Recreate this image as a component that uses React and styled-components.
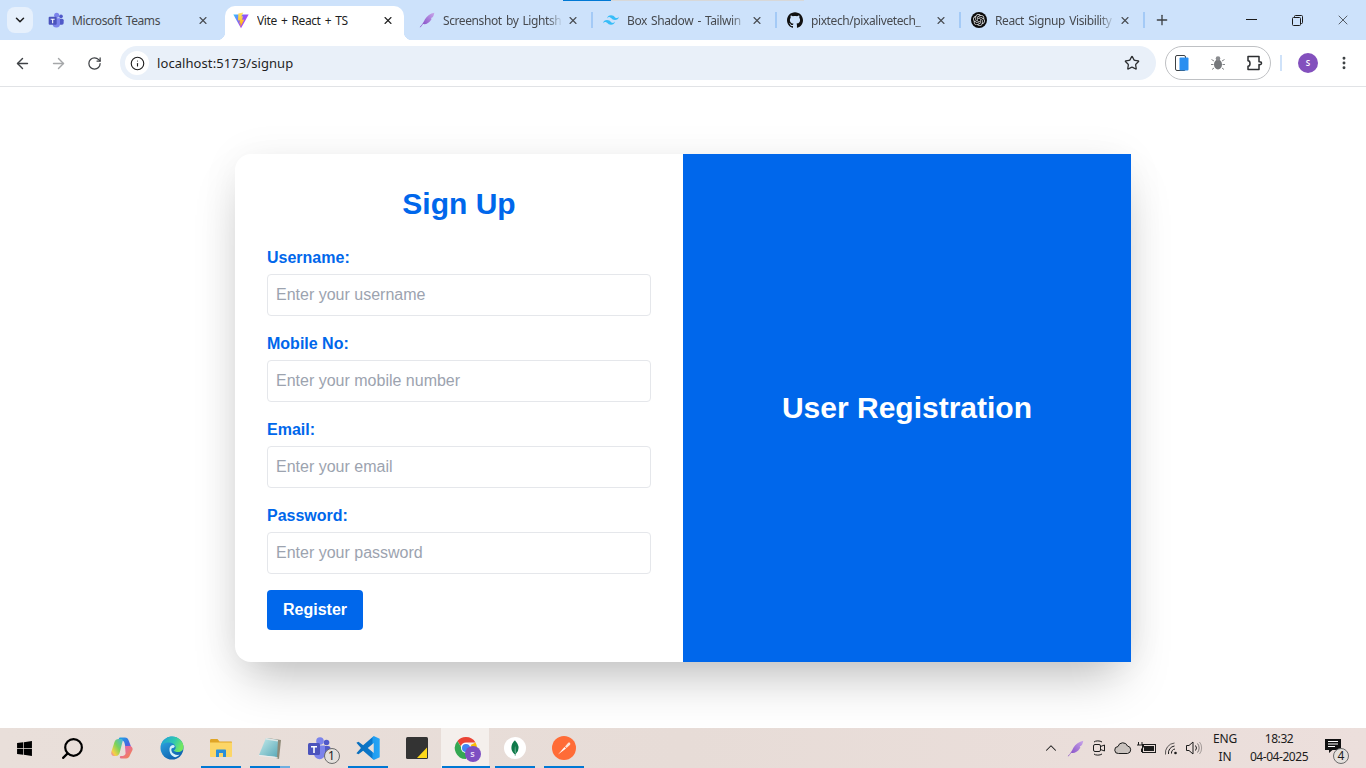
import React from "react";
import styled, { createGlobalStyle } from "styled-components";
import { ArrowLeft, ArrowRight, RotateCw, Star, Info, X, Plus, ChevronDown, ChevronUp, EllipsisVertical, Search } from "lucide-react";
import { SiGithub, SiTailwindcss, SiOpenai, SiMongodb } from "react-icons/si";
import { FaWindows } from "react-icons/fa";

const Global = createGlobalStyle`
  html, body { margin: 0; padding: 0; background: #fff; overflow: hidden; }
  * { box-sizing: border-box; }
`;

const UI = `"Noto Sans", "Open Sans", sans-serif`;
const WEB = `"Liberation Sans", Arial, sans-serif`;
const BLUE = "#0067eb";

const Screen = styled.div`
  width: 1366px; height: 768px; display: flex; flex-direction: column; background: #fff; position: relative; overflow: hidden;
`;

/* ---------- tab strip ---------- */
const TabStrip = styled.div`
  height: 40px; flex: none; background: #cde2fb; display: flex; position: relative;
`;
const CaptureMark = styled.div`
  position: absolute; top: 0; left: 563px; width: 241px; height: 1px;
  background: linear-gradient(to right, #0078d4 0 48px, #d8d8d8 48px);
`;
const TabMenu = styled.div`
  width: 26px; height: 26px; margin: 7px 8px 0 7px; border-radius: 8px; background: #e6f0fc; color: #1f1f1f;
  display: flex; align-items: center; justify-content: center; flex: none;
`;
const Tab = styled.div`
  width: ${p => p.$w}px; height: 34px; margin-top: 6px; flex: none; position: relative; display: flex; align-items: center;
  padding: 0 ${p => p.$right}px 6px ${p => p.$pad}px; gap: 8px;
  font: 12px/16px ${UI}; letter-spacing: -0.4px; word-spacing: 1.4px; color: ${p => (p.$active ? "#1f1f1f" : "#474a4f")};
  ${p => p.$active && `
    background: #fff; border-radius: 10px 10px 0 0;
    &::before, &::after { content: ""; position: absolute; bottom: 0; width: 8px; height: 8px; }
    &::before { left: -8px; background: radial-gradient(circle at 0 0, #cde2fb 8px, #fff 8.5px); }
    &::after { right: -8px; background: radial-gradient(circle at 100% 0, #cde2fb 8px, #fff 8.5px); }
  `}
  ${p => p.$sep && `
    &::after { content: ""; position: absolute; right: 0; top: 6px; width: 2px; height: 16px; background: #a4caf6; }
  `}
`;
const TabIcon = styled.span`
  width: 16px; height: 16px; flex: none; display: flex; align-items: center; justify-content: center;
`;
const TabTitle = styled.span`
  flex: 1; min-width: 0; padding-top: 2px; white-space: nowrap; overflow: hidden;
  ${p => p.$fade && `margin-right: -4px; mask-image: linear-gradient(to right, #000 calc(100% - 16px), transparent);`}
`;
const TabClose = styled.span`
  width: 12px; height: 12px; flex: none; display: flex; align-items: center; justify-content: center;
  color: ${p => (p.$active ? "#1f1f1f" : "#474a4f")};
`;
const NewTab = styled.div`
  width: 34px; height: 34px; margin: 3px 0 0 0; flex: none; display: flex; align-items: center; justify-content: center; color: #3c4043;
`;
const WindowControls = styled.div`
  margin-left: auto; display: flex; height: 40px;
`;
const WinBtn = styled.div`
  width: 46px; display: flex; align-items: center; justify-content: center;
`;
const KnotDisc = styled.span`
  width: 16px; height: 16px; border-radius: 50%; background: #0c0c0c; color: #ddd; display: flex; align-items: center; justify-content: center;
`;

/* ---------- toolbar ---------- */
const Toolbar = styled.div`
  height: 47px; flex: none; background: #fff; border-bottom: 1px solid #e1e3e6; border-radius: 8px 8px 0 0;
  display: flex; align-items: center; padding: 0 0 0 4px; position: relative;
`;
const NavBtn = styled.div`
  width: 36px; height: 34px; flex: none; display: flex; align-items: center; justify-content: center;
  color: ${p => (p.$off ? "#a5a7a9" : "#3f4246")};
`;
const Omnibox = styled.div`
  width: 1036px; height: 34px; margin-left: 8px; flex: none; border-radius: 17px; background: #e9f0f9; display: flex; align-items: center; padding: 0 16px 0 5px;
`;
const InfoDot = styled.div`
  width: 24px; height: 24px; border-radius: 50%; background: #fff; color: #1f1f1f; display: flex; align-items: center; justify-content: center; flex: none;
`;
const Url = styled.div`
  flex: 1; margin-left: 8px; font: 13px/18px ${UI}; letter-spacing: 0.08px; color: #1f1f1f;
`;
const ExtPill = styled.div`
  width: 106px; height: 34px; margin-left: 9px; border: 1px solid #bfc1c4; border-radius: 17px; flex: none;
  display: flex; align-items: center; justify-content: space-between; padding: 0 6px;
`;
const ExtIcon = styled.div`
  width: 20px; height: 20px; display: flex; align-items: center; justify-content: center;
`;
const ToolDivider = styled.div`
  width: 2px; height: 16px; background: #cfe2f9; margin-left: 9px; flex: none;
`;
const Avatar = styled.div`
  width: 20px; height: 20px; margin-left: 16px; border-radius: 50%; background: #8350bd; color: #fff; flex: none;
  font: 600 8px/20px ${UI}; text-align: center;
`;
const Dots = styled.div`
  width: 20px; height: 20px; margin-left: 16px; flex: none; color: #3c4043; display: flex; align-items: center; justify-content: center;
`;

/* ---------- page ---------- */
const Main = styled.main`
  flex: 1; display: flex; align-items: center; justify-content: center; padding-top: 1px; background: #fff;
`;
const Card = styled.div`
  width: 896px; height: 508px; display: flex; background: #fff; border-radius: 16px;
  box-shadow: 0 25px 50px -12px rgba(0,0,0,.25), 0 0 40px rgba(0,0,0,.05);
`;
const FormSide = styled.form`
  width: 448px; padding: 32px; display: flex; flex-direction: column;
`;
const Title = styled.h2`
  margin: 0 0 24px; font: 700 30px/36px ${WEB}; color: ${BLUE}; text-align: center;
`;
const Field = styled.div`
  margin-bottom: 16px; display: flex; flex-direction: column;
`;
const Label = styled.label`
  font: 700 16px/24px ${WEB}; color: ${BLUE}; margin-bottom: 4px;
`;
const Input = styled.input`
  width: 100%; height: 42px; padding: 8px; border: 1px solid #e5e7eb; border-radius: 4px; background: #fff;
  font: 16px/24px ${WEB}; color: #111; outline: none;
  &::placeholder { color: #9ca3af; opacity: 1; }
`;
const Submit = styled.button`
  width: 96px; height: 40px; border: 0; border-radius: 4px; background: ${BLUE}; color: #fff; font: 700 16px/24px ${WEB}; padding: 0;
`;
const BlueSide = styled.div`
  width: 448px; background: ${BLUE}; display: flex; align-items: center; justify-content: center;
  color: #fff; font: 700 30px/36px ${WEB};
`;

/* ---------- taskbar ---------- */
const Taskbar = styled.div`
  height: 40px; flex: none; background: linear-gradient(to right, #e9dfda, #e7dcd7 50%, #ecdfdc); display: flex; align-items: stretch;
`;
const TaskItem = styled.div`
  width: ${p => p.$w || 49}px; flex: none; display: flex; align-items: center; justify-content: center; position: relative;
  ${p => p.$active && `background: linear-gradient(to right, transparent 0 0.5px, #f4efec 0.5px 48.5px, transparent 48.5px);`}
  ${p => p.$run && `
    &::after { content: ""; position: absolute; bottom: 0; left: ${p.$active ? "0.5px" : "4.5px"}; width: ${p.$active ? "48px" : "40px"}; height: 2px;
      background: ${p.$stack ? "linear-gradient(to right, #0078d4 30px, #6eaee0 30px)" : "#0078d4"}; }
  `}
`;
const Tray = styled.div`
  margin-left: auto; display: flex; align-items: center;
`;
const TrayIcon = styled.div`
  width: ${p => p.$w || 24}px; flex: none; display: flex; align-items: center; justify-content: center; color: #1c1c1c;
`;
const Lang = styled.div`
  width: 36px; margin-left: 2px; text-align: center; font: 12px/18px ${UI}; color: #1c1c1c; letter-spacing: -0.2px;
`;
const Clock = styled.div`
  width: 68px; margin-left: 2px; text-align: center; font: 12px/18px ${UI}; color: #1c1c1c; letter-spacing: -0.45px;
`;
const Notify = styled.div`
  width: 40px; height: 100%; margin-right: 13px; position: relative; display: flex; align-items: center; justify-content: center; padding-bottom: 4px;
`;
const CountBadge = styled.span`
  position: absolute; right: ${p => p.$r}px; bottom: ${p => p.$b}px; width: 16px; height: 16px; border-radius: 50%;
  border: 1px solid #6b6b6b; background: #e4e0dc; color: #1c1c1c; font: 12px/14px ${UI}; text-align: center;
`;
const TeamsWrap = styled.span`
  position: relative; display: flex;
`;
const ChromeWrap = styled.span`
  position: relative; display: flex;
`;
const PurpleBadge = styled.span`
  position: absolute; right: -3px; bottom: -2px; width: 16px; height: 16px; border-radius: 50%; background: #7d4fc2; color: #e8dcf5;
  font: 600 9px/15px ${UI}; text-align: center;
`;
const MongoBadge = styled.span`
  width: 22px; height: 22px; border-radius: 50%; background: #fff; display: flex; align-items: center; justify-content: center; color: #0f7a4a;
`;
const PostmanBadge = styled.span`
  width: 24px; height: 24px; border-radius: 50%; background: #ff6c37; display: flex; align-items: center; justify-content: center;
`;

/* ---------- drawn icons ---------- */
const Teams = ({ s = 16 }) => (
  <svg width={s} height={s} viewBox="0 0 24 24">
    <circle cx="19.5" cy="6.5" r="2.8" fill="#5059c9" />
    <rect x="15" y="10" width="8.5" height="9" rx="2.5" fill="#5059c9" />
    <circle cx="13" cy="5" r="3.8" fill="#7b83eb" />
    <path d="M8 9.5h10v8a5.5 5.5 0 0 1-11 .5z" fill="#7b83eb" />
    <rect x="1" y="7" width="12" height="12" rx="1.5" fill="#4b53bc" />
    <path d="M4 10h6v1.5H7.8V17H6.2v-5.5H4z" fill="#fff" />
  </svg>
);
const Vite = () => (
  <svg width="17" height="17" viewBox="0 0 24 24">
    <defs>
      <linearGradient id="vg1" x1="0" y1="0" x2="1" y2="0.6"><stop offset="0" stopColor="#35c8ff" /><stop offset=".55" stopColor="#8a5cf5" /><stop offset="1" stopColor="#c52ffe" /></linearGradient>
      <linearGradient id="vg2" x1="0" y1="0" x2="0" y2="1"><stop offset="0" stopColor="#ffe56b" /><stop offset="1" stopColor="#ffa800" /></linearGradient>
    </defs>
    <path d="M0.5 3 23.500 3 12 23.500z" fill="url(#vg1)" />
    <path d="M15.500 0 8 1.500 7.500 12l3-.5-1 5.500 2-.8-.5 5.800 6-11.500-3.500.5 1.500-5.500-2.500.5z" fill="url(#vg2)" />
  </svg>
);
const Feather = ({ s = 16 }) => (
  <svg width={s} height={s} viewBox="0 0 24 24">
    <defs><linearGradient id="fg" x1="0" y1="1" x2="1" y2="0"><stop offset="0" stopColor="#7a3fc0" /><stop offset="1" stopColor="#c9a6ea" /></linearGradient></defs>
    <path d="M1 23C5 19 7 15 9 11 12 6 17 2 23 1c-1 5-2 7-5 8 1 1 1 2 0 3-3 5-8 7-12 6-1.5 2-3 4-4 5z" fill="url(#fg)" />
  </svg>
);
const Copilot = () => (
  <svg width="24" height="22" viewBox="0 0 24 22">
    <defs>
      <linearGradient id="cp1" x1="0" y1="0" x2="1" y2="1"><stop offset="0" stopColor="#1fa8e8" /><stop offset=".6" stopColor="#3f6ce0" /><stop offset="1" stopColor="#8a4fd8" /></linearGradient>
      <linearGradient id="cp2" x1="1" y1="0" x2="0" y2="1"><stop offset="0" stopColor="#3fb4e8" /><stop offset=".45" stopColor="#7bd35a" /><stop offset=".8" stopColor="#f7d046" /><stop offset="1" stopColor="#e86ac0" /></linearGradient>
      <linearGradient id="cp3" x1="0" y1="0" x2="1" y2="1"><stop offset="0" stopColor="#e05ad0" /><stop offset="1" stopColor="#f58a3c" /></linearGradient>
    </defs>
    <path d="M10 .5h5c2 0 3 1.200 3.700 3L21 9.500c.4 1.400-.6 2.500-2 2.500h-3l-1.500-6c-.4-1.600-1.200-2.600-2.500-2.600H9C8.600 1.500 9 .5 10 .5z" fill="url(#cp1)" />
    <path d="M8.500 2h3c1 0 1.500 1 1.200 2L9.600 16c-.4 1.500-1.600 3-3.600 3H4C2 19 .8 17 1.300 15L4.500 5C5.100 3 6.500 2 8.500 2z" fill="url(#cp2)" />
    <path d="M15 9h4.500c2 0 3.600 1.800 3 4L20 18c-.6 2-2 3.500-4 3.500h-5c-1 0-1.400-1-1-2l.6-.5h2c1.500 0 2.600-1 3-2.500z" fill="url(#cp3)" />
  </svg>
);
const Edge = () => (
  <svg width="24" height="24" viewBox="0 0 24 24">
    <defs>
      <linearGradient id="eg1" x1="0.2" y1="0" x2="0.8" y2="1"><stop offset="0" stopColor="#2fa8e4" /><stop offset="1" stopColor="#0b5aa8" /></linearGradient>
      <linearGradient id="eg2" x1="0" y1="0" x2="1" y2="0.4"><stop offset="0" stopColor="#1f9fd8" /><stop offset=".6" stopColor="#30c8b0" /><stop offset="1" stopColor="#72e860" /></linearGradient>
    </defs>
    <circle cx="12" cy="12" r="11.500" fill="url(#eg1)" />
    <path d="M1.500 8C3.500 3 8 .5 12 .5c6 0 11.500 4.500 11.500 10.500 0 3.500-2.500 5-5.500 5-2 0-4-.7-4.500-1.500 2-1 2.500-2.500 2-4-.8-2.500-3.500-4-6.500-4C6 6.500 3.500 7 1.500 9.500z" fill="url(#eg2)" />
    <path d="M9.500 12.500c.3-2 2-3.500 3.500-3.500 1.500 0 2 1 1.500 2-.4.700-1 1-1.800 1-1.200 0-1.700 1.300-1.200 3 .8 2.800 4 4.300 8 3.800-1 1-2.500 2-4 2.500-3.500-.8-6.500-4-6-8.800z" fill="#d6f1fa" />
  </svg>
);
const Explorer = () => (
  <svg width="22" height="20" viewBox="0 0 22 20">
    <path d="M0 2.500C0 1.500.6 1 1.500 1h6l2 2.500H21c.6 0 1 .4 1 1V5H0z" fill="#e0a526" />
    <path d="M0 4.500h22v13.500c0 .7-.4 1-1 1H1c-.6 0-1-.3-1-1z" fill="#fcd667" />
    <path d="M6 19v-6.500c0-.5.4-1 1-1h8c.6 0 1 .5 1 1V19h-3v-4H9v4z" fill="#2a8fd8" />
  </svg>
);
const Notepad = () => (
  <svg width="24" height="24" viewBox="0 0 24 24">
    <defs><linearGradient id="np" x1="0" y1="0" x2="1" y2="1"><stop offset="0" stopColor="#c5ecec" /><stop offset="1" stopColor="#5aa9b8" /></linearGradient></defs>
    <path d="M9 2 23 4l-2 19-3-1z" fill="#8e8a78" />
    <path d="M8 2l12 2L19 21 1 19z" fill="url(#np)" />
    <path d="M1 19l18 2 1 1-19-2z" fill="#e9eef0" />
    <path d="M8 2l12 2-.2 1.500L7.500 3.500z" fill="#dfe6e6" />
  </svg>
);
const VSCode = () => (
  <svg width="26" height="26" viewBox="0 0 24 24">
    <defs><linearGradient id="vsc" x1="0" y1="0" x2="1" y2="0"><stop offset="0" stopColor="#0a6ebc" /><stop offset=".68" stopColor="#0a78cc" /><stop offset=".7" stopColor="#1f9cf0" /><stop offset="1" stopColor="#27a5f5" /></linearGradient></defs>
    <path fillRule="evenodd" d="M17.300 1 7.500 9.500 3.200 6.200 1.300 7.200 5.500 12 1.300 16.800 3.200 17.800 7.500 14.500 17.300 23 22.800 20.500V3.500zM17.300 7.300 11.800 12 17.300 16.700z" fill="url(#vsc)" />
  </svg>
);
const Sticky = () => (
  <svg width="22" height="22" viewBox="0 0 22 22">
    <rect width="22" height="22" rx="1.500" fill="#333" />
    <path d="M11 21 21 10.500V21z" fill="#ffd91a" />
  </svg>
);
const Chrome = () => (
  <ChromeWrap>
    <svg width="24" height="24" viewBox="0 0 24 24">
      <path d="M12 1a11 11 0 0 1 9.530 5.500H12a5.500 5.500 0 0 0-5.200 3.700L3.400 4.900A11 11 0 0 1 12 1z" fill="#ea4335" />
      <path d="M21.530 6.500A11 11 0 0 1 12.500 23l4.300-8.200A5.500 5.500 0 0 0 16.800 9z" fill="#fbbc04" />
      <path d="M3.400 4.900 8 12.500A5 5 0 0 0 14 17L12 23A11 11 0 0 1 3.400 4.900z" fill="#34a853" />
      <circle cx="12" cy="12" r="5" fill="#fff" /><circle cx="12" cy="12" r="4" fill="#4285f4" />
    </svg>
    <PurpleBadge>s</PurpleBadge>
  </ChromeWrap>
);
const Pen = () => (
  <svg width="16" height="16" viewBox="0 0 16 16">
    <path d="M2 14.500 8.500 7 10 8.500z" fill="#fff" />
    <path d="M9 6.500 12 3c.8-.7 1.600-.5 2 0s.5 1.300-.2 2l-3.300 3z" fill="#fde4d8" />
  </svg>
);
const Restore = () => (
  <svg width="11" height="11" viewBox="0 0 11 11" fill="none" stroke="#1a1a1a">
    <rect x=".5" y="2.500" width="8" height="8" rx="1" />
    <path d="M2.500 2.500v-1a1 1 0 0 1 1-1h6a1 1 0 0 1 1 1v6a1 1 0 0 1-1 1h-1" />
  </svg>
);
const PhoneExt = () => (
  <svg width="16" height="16" viewBox="0 0 16 16">
    <rect x="1.500" y=".5" width="10" height="15" rx="1.500" fill="#fff" stroke="#3c4043" />
    <rect x="5.500" y="2.500" width="9" height="13" rx="1" fill="#2b8ff0" />
  </svg>
);
const Bug = () => (
  <svg width="16" height="16" viewBox="0 0 16 16" fill="#76787b" stroke="#85878a">
    <ellipse cx="8" cy="9.500" rx="4" ry="5" stroke="none" />
    <circle cx="8" cy="3.500" r="2.300" stroke="none" fill="#8a8c8f" />
    <path d="M4 6 1.500 4.500M12 6l2.500-1.500M3.500 9.500H1M12.500 9.500H15M4 13l-2 1.500M12 13l2 1.500" fill="none" />
  </svg>
);
const Puzzle = () => (
  <svg width="18" height="18" viewBox="0 0 18 18" fill="none" stroke="#2c2e31" strokeWidth="1.500" strokeLinejoin="round">
    <path d="M3 2.500h11v5.300c1.500-.3 2.500.4 2.500 1.400s-1 1.700-2.500 1.400v5H3v-3.300c1.300 0 2-1.300 2-2.800S4.300 6.800 3 6.800z" />
  </svg>
);
const Meet = () => (
  <svg width="16" height="20" viewBox="0 0 16 20" fill="none" stroke="#1c1c1c">
    <rect x="2.500" y="6.500" width="7" height="7" rx="1.500" />
    <path d="M9.500 8.500 13.500 7v6l-4-1.500" />
    <path d="M3 4c1.500-1.500 6-1.500 8 0M3 16c1.500 1.500 6 1.500 8 0" />
  </svg>
);
const Cloud = () => (
  <svg width="18" height="14" viewBox="0 0 18 14">
    <path d="M4.500 12.500a3.500 3.500 0 0 1-.5-7 5 5 0 0 1 9.500-.5 3.800 3.800 0 0 1 0 7.500z" fill="#c9c2be" stroke="#1c1c1c" />
  </svg>
);
const Battery = () => (
  <svg width="20" height="14" viewBox="0 0 20 14">
    <path d="M1.500 1v3M5 1v3M0 4h6.500v2L4.500 8v3" fill="none" stroke="#1c1c1c" />
    <rect x="5.500" y="3.500" width="13" height="8" fill="none" stroke="#1c1c1c" />
    <rect x="7" y="5" width="10" height="5" fill="#1c1c1c" />
  </svg>
);
const WifiTilt = () => (
  <svg width="16" height="16" viewBox="0 0 16 16" fill="none" stroke="#1c1c1c" strokeWidth="1">
    <circle cx="12.500" cy="13" r="1.300" fill="#1c1c1c" stroke="none" />
    <path d="M8.500 13.500a4 4 0 0 1 3.500-4.500" />
    <path d="M5.500 14a7 7 0 0 1 6-8" />
    <path d="M2.500 14.500a10 10 0 0 1 9-11.500" strokeOpacity=".7" />
  </svg>
);
const Speaker = () => (
  <svg width="18" height="16" viewBox="0 0 18 16" fill="none" stroke="#1c1c1c" strokeWidth="1">
    <path d="M1.500 5.500h2.500L8 2v12L4 10.500H1.500z" />
    <path d="M10.500 5.500a4 4 0 0 1 0 5" />
    <path d="M12.500 3.500a7 7 0 0 1 0 9" strokeOpacity=".55" />
    <path d="M14.500 2a9.500 9.500 0 0 1 0 12" strokeOpacity=".35" />
  </svg>
);
const Chat = () => (
  <svg width="16" height="14" viewBox="0 0 16 14">
    <path d="M0 0h16v11H7.500L4 14v-3H0z" fill="#111" />
    <path d="M3 2.500h10M3 5h10M3 7.500h7" stroke="#fff" />
  </svg>
);

const tabs = [
  { t: "Microsoft Teams", i: <Teams />, pad: 7, w: 184, right: 16 },
  { t: "Vite + React + TS", i: <Vite />, pad: 8, w: 179, right: 10, active: true },
  { t: "Screenshot by Lightsh", i: <Feather />, pad: 15, w: 189, right: 14, fade: true, sep: true },
  { t: "Box Shadow - Tailwin", i: <SiTailwindcss size={16} color="#38bdf8" />, pad: 10, w: 184, right: 14, fade: true, sep: true },
  { t: "pixtech/pixalivetech_", i: <SiGithub size={16} color="#111" />, pad: 10, w: 184, right: 14, fade: true, sep: true },
  { t: "React Signup Visibility", i: <KnotDisc><SiOpenai size={12} /></KnotDisc>, pad: 10, w: 184, right: 14, fade: true, sep: true },
];

const fields = [
  ["Username:", "Enter your username", "text"],
  ["Mobile No:", "Enter your mobile number", "tel"],
  ["Email:", "Enter your email", "email"],
  ["Password:", "Enter your password", "password"],
];

export default function App() {
  return (
    <Screen>
      <Global />
      <TabStrip>
        <CaptureMark />
        <TabMenu><ChevronDown size={14} strokeWidth={2.6} /></TabMenu>
        {tabs.map(tab => (
          <Tab key={tab.t} $pad={tab.pad} $w={tab.w} $right={tab.right} $active={tab.active} $sep={tab.sep}>
            <TabIcon>{tab.i}</TabIcon>
            <TabTitle $fade={tab.fade}>{tab.t}</TabTitle>
            <TabClose $active={tab.active}><X size={13} strokeWidth={2.2} /></TabClose>
          </Tab>
        ))}
        <NewTab><Plus size={16} strokeWidth={2} /></NewTab>
        <WindowControls>
          <WinBtn><svg width="11" height="2"><path d="M0 .5h11" stroke="#1a1a1a" /></svg></WinBtn>
          <WinBtn><Restore /></WinBtn>
          <WinBtn><X size={16} strokeWidth={1} color="#1a1a1a" /></WinBtn>
        </WindowControls>
      </TabStrip>

      <Toolbar>
        <NavBtn><ArrowLeft size={17} strokeWidth={2} /></NavBtn>
        <NavBtn $off><ArrowRight size={17} strokeWidth={2} /></NavBtn>
        <NavBtn><RotateCw size={15} strokeWidth={2} /></NavBtn>
        <Omnibox>
          <InfoDot><Info size={15} strokeWidth={1.8} /></InfoDot>
          <Url>localhost:5173/signup</Url>
          <Star size={16} strokeWidth={1.9} color="#2c2e31" />
        </Omnibox>
        <ExtPill>
          <ExtIcon><PhoneExt /></ExtIcon>
          <ExtIcon><Bug /></ExtIcon>
          <ExtIcon><Puzzle /></ExtIcon>
        </ExtPill>
        <ToolDivider />
        <Avatar>S</Avatar>
        <Dots><EllipsisVertical size={16} strokeWidth={2.4} /></Dots>
      </Toolbar>

      <Main>
        <Card>
          <FormSide>
            <Title>Sign Up</Title>
            {fields.map(([label, placeholder, type]) => (
              <Field key={label}>
                <Label>{label}</Label>
                <Input type={type} placeholder={placeholder} />
              </Field>
            ))}
            <Submit type="button">Register</Submit>
          </FormSide>
          <BlueSide>User Registration</BlueSide>
        </Card>
      </Main>

      <Taskbar>
        <TaskItem $w={48}><FaWindows size={17} color="#000" /></TaskItem>
        <TaskItem><Search size={25} strokeWidth={2.1} color="#000" style={{ transform: "scaleX(-1)" }} /></TaskItem>
        <TaskItem $w={50}><Copilot /></TaskItem>
        <TaskItem><Edge /></TaskItem>
        <TaskItem $run><Explorer /></TaskItem>
        <TaskItem $run $stack><Notepad /></TaskItem>
        <TaskItem><TeamsWrap><Teams s={24} /><CountBadge $r={-9} $b={-4}>1</CountBadge></TeamsWrap></TaskItem>
        <TaskItem $run><VSCode /></TaskItem>
        <TaskItem><Sticky /></TaskItem>
        <TaskItem $run $active><Chrome /></TaskItem>
        <TaskItem $run><MongoBadge><SiMongodb size={16} /></MongoBadge></TaskItem>
        <TaskItem $run><PostmanBadge><Pen /></PostmanBadge></TaskItem>
        <Tray>
          <TrayIcon><ChevronUp size={18} strokeWidth={1.4} /></TrayIcon>
          <TrayIcon><Feather s={17} /></TrayIcon>
          <TrayIcon><Meet /></TrayIcon>
          <TrayIcon><Cloud /></TrayIcon>
          <TrayIcon><Battery /></TrayIcon>
          <TrayIcon><WifiTilt /></TrayIcon>
          <TrayIcon $w={22}><Speaker /></TrayIcon>
          <Lang>ENG<br />IN</Lang>
          <Clock>18:32<br />04-04-2025</Clock>
          <Notify><Chat /><CountBadge $r={4} $b={4}>4</CountBadge></Notify>
        </Tray>
      </Taskbar>
    </Screen>
  );
}
